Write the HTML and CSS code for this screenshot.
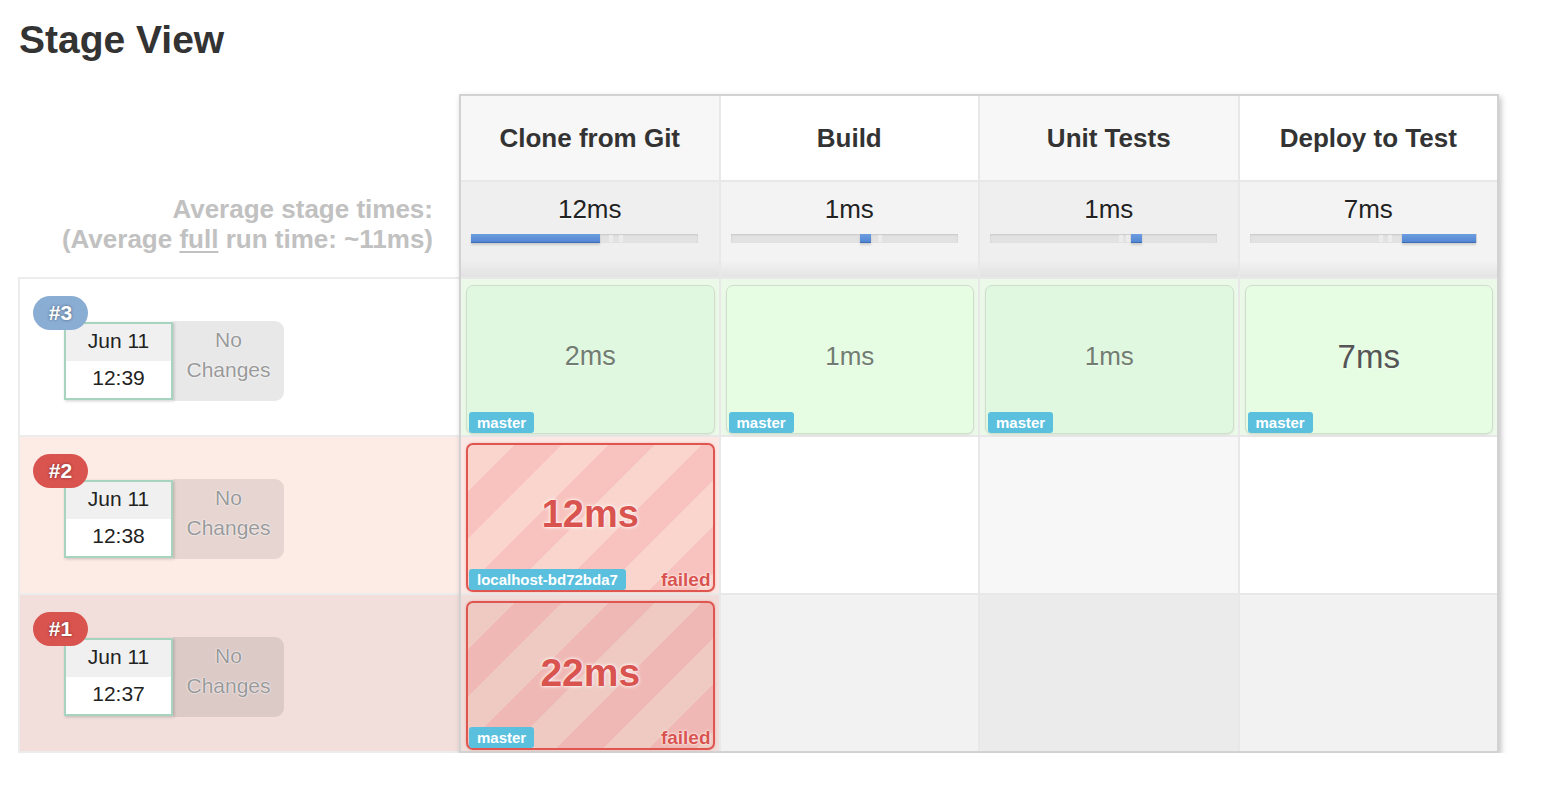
FILE: index.html
```html
<!DOCTYPE html>
<html>
<head>
<meta charset="utf-8">
<title>Stage View</title>
<link rel="stylesheet" href="styles.css">
</head>
<body>
<h2 class="title">Stage View</h2>
<div class="stage-view">
  <div class="runs">
    <div class="runs-head"></div>
    <div class="avg-label">Average stage times:<br>(Average <u>full</u> run time: ~11ms)</div>
    <div class="run-list">
      <div class="run run-ok">
        <div class="run-inner">
          <span class="badge badge-ok">#3</span>
          <div class="date"><div class="date-day">Jun 11</div><div class="date-time">12:39</div></div>
          <div class="changes">No<br>Changes</div>
        </div>
      </div>
      <div class="run run-fail">
        <div class="run-inner">
          <span class="badge badge-fail">#2</span>
          <div class="date"><div class="date-day">Jun 11</div><div class="date-time">12:38</div></div>
          <div class="changes">No<br>Changes</div>
        </div>
      </div>
      <div class="run run-fail-dark">
        <div class="run-inner">
          <span class="badge badge-fail">#1</span>
          <div class="date"><div class="date-day">Jun 11</div><div class="date-time">12:37</div></div>
          <div class="changes">No<br>Changes</div>
        </div>
      </div>
    </div>
  </div>
  <div class="table-box">
    <div class="grid">
      <div class="head col-odd">Clone from Git</div>
      <div class="head col-even">Build</div>
      <div class="head col-odd">Unit Tests</div>
      <div class="head col-even">Deploy to Test</div>

      <div class="avg avg-odd">
        <div class="avg-time">12ms</div>
        <div class="bar">
          <span class="tick" style="left:61%"></span>
          <span class="tick" style="left:65%"></span>
          <span class="seg" style="left:0%;width:57%"></span>
        </div>
      </div>
      <div class="avg avg-even">
        <div class="avg-time">1ms</div>
        <div class="bar">
          <span class="tick" style="left:65%"></span>
          <span class="seg" style="left:57%;width:5%"></span>
        </div>
      </div>
      <div class="avg avg-odd">
        <div class="avg-time">1ms</div>
        <div class="bar">
          <span class="tick" style="left:57%"></span>
          <span class="tick" style="left:60%"></span>
          <span class="seg" style="left:62%;width:5%"></span>
        </div>
      </div>
      <div class="avg avg-even">
        <div class="avg-time">7ms</div>
        <div class="bar">
          <span class="tick" style="left:57%"></span>
          <span class="tick" style="left:61%"></span>
          <span class="seg" style="left:67%;width:33%"></span>
        </div>
      </div>

      <div class="cell cell-ok">
        <div class="box box-ok box-ok-odd">
          <div class="dur dur-ok" style="font-size:27px">2ms</div>
          <div class="foot"><span class="label">master</span></div>
        </div>
      </div>
      <div class="cell cell-ok">
        <div class="box box-ok box-ok-even">
          <div class="dur dur-ok" style="font-size:26px">1ms</div>
          <div class="foot"><span class="label">master</span></div>
        </div>
      </div>
      <div class="cell cell-ok">
        <div class="box box-ok box-ok-odd">
          <div class="dur dur-ok" style="font-size:26px">1ms</div>
          <div class="foot"><span class="label">master</span></div>
        </div>
      </div>
      <div class="cell cell-ok">
        <div class="box box-ok box-ok-even">
          <div class="dur dur-ok dur-dark" style="font-size:33px">7ms</div>
          <div class="foot"><span class="label">master</span></div>
        </div>
      </div>

      <div class="cell cell-fail">
        <div class="box box-fail">
          <div class="dur dur-fail" style="font-size:38px">12ms</div>
          <div class="foot"><span class="label">localhost-bd72bda7</span><span class="failed">failed</span></div>
        </div>
      </div>
      <div class="cell empty-even"></div>
      <div class="cell empty-odd"></div>
      <div class="cell empty-even"></div>

      <div class="cell cell-fail-dark">
        <div class="box box-fail box-fail-dark">
          <div class="dur dur-fail" style="font-size:39px">22ms</div>
          <div class="foot"><span class="label">master</span><span class="failed">failed</span></div>
        </div>
      </div>
      <div class="cell empty-even-dark"></div>
      <div class="cell empty-odd-dark"></div>
      <div class="cell empty-even-dark"></div>
    </div>
  </div>
</div>
</body>
</html>
```

FILE: styles.css
```css
body {
  margin: 0;
  background: #fff;
  color: #333;
  font-family: "Liberation Sans", Arial, Helvetica, sans-serif;
}

.title {
  margin: 17px 0 0 19px;
  font-size: 39px;
  line-height: 46px;
  font-weight: bold;
  color: #333;
}

.stage-view {
  display: flex;
  align-items: flex-start;
  margin-top: 31px;
  padding-left: 18px;
}

/* left column */
.runs {
  width: 441px;
  padding-top: 2px;
}

.runs-head {
  height: 84px;
}

.avg-label {
  height: 95px;
  margin-top: 2px;
  box-sizing: border-box;
  padding: 12px 26px 0 0;
  text-align: right;
  font-size: 26px;
  line-height: 30px;
  font-weight: bold;
  color: #c1c1c1;
}

.avg-label u {
  text-decoration-thickness: 2px;
  text-underline-offset: 3px;
}

.run-list {
  display: flex;
  flex-direction: column;
  gap: 2px;
  background: #ececec;
  padding: 2px 0 2px 2px;
}

.run {
  height: 156px;
  box-sizing: border-box;
  padding: 42px 0 0 44px;
}

.run-ok { background: #fff; }
.run-fail { background: #fdebe6; }
.run-fail-dark { background: #f2dfdb; }

.run-inner {
  position: relative;
  display: flex;
  align-items: center;
}

.badge {
  position: absolute;
  left: -31px;
  top: -25px;
  z-index: 2;
  width: 55px;
  height: 34px;
  border-radius: 17px;
  color: #fff;
  font-size: 21px;
  font-weight: bold;
  line-height: 34px;
  text-align: center;
  text-shadow: 0 0 3px rgba(0, 0, 0, 0.45);
}

.badge-ok { background: #8aadd3; }
.badge-fail { background: #d9534f; }

.date {
  position: relative;
  z-index: 1;
  width: 109px;
  height: 78px;
  box-sizing: border-box;
  border: 2px solid #a6d4be;
  background: #fff;
  box-shadow: 1px 1px 3px rgba(0, 0, 0, 0.2);
  display: flex;
  flex-direction: column;
  font-size: 21px;
  color: #222;
}

.date-day {
  height: 37px;
  line-height: 34px;
  background: #f0f0f0;
  text-align: center;
}

.date-time {
  flex: 1;
  line-height: 34px;
  text-align: center;
}

.changes {
  width: 111px;
  height: 80px;
  box-sizing: border-box;
  padding-top: 4px;
  border-radius: 0 9px 9px 0;
  background: rgba(0, 0, 0, 0.09);
  color: #999;
  font-size: 21px;
  line-height: 30px;
  text-align: center;
  text-shadow: 0 0 2px #fff, 0 0 1px #fff;
}

/* table */
.table-box {
  width: 1036px;
  border: 2px solid #d2d2d2;
  background: #e8e8e8;
  box-shadow: 2px 3px 6px rgba(0, 0, 0, 0.25);
}

.grid {
  display: grid;
  grid-template-columns: repeat(4, 1fr);
  grid-template-rows: 84px 95px 156px 156px 156px;
  gap: 2px;
}

.head {
  display: flex;
  align-items: center;
  justify-content: center;
  font-size: 26px;
  font-weight: bold;
  color: #333;
}

.col-odd { background: #f7f7f7; }
.col-even { background: #fff; }

.avg {
  box-sizing: border-box;
  padding-top: 12px;
}

.avg-odd { background: linear-gradient(to bottom, #efefef 0, #efefef 82%, #e2e2e2 100%); }
.avg-even { background: linear-gradient(to bottom, #f3f3f3 0, #f3f3f3 82%, #e4e4e4 100%); }

.avg-time {
  text-align: center;
  font-size: 26px;
  line-height: 30px;
  color: #222;
  text-shadow: 0 1px 1px #fff;
}

.bar {
  position: relative;
  width: 227px;
  height: 9px;
  margin: 10px 0 0 10px;
  background: #e2e2e2;
  box-shadow: inset 0 1px 2px rgba(0, 0, 0, 0.12);
}

.tick {
  position: absolute;
  top: 1px;
  bottom: 1px;
  width: 4px;
  background: #ececec;
}

.seg {
  position: absolute;
  top: 0;
  height: 8px;
  background: linear-gradient(to bottom, #6d9de0, #5387d3);
  border-bottom: 1px solid #3e6db5;
  box-shadow: 0 2px 2px rgba(0, 0, 0, 0.15);
}

.cell {
  display: flex;
  box-sizing: border-box;
  padding: 6px 4px 1px 5px;
}

.cell-ok { background: #ebf9e9; }
.cell-fail { background: #fbe7e3; }
.cell-fail-dark { background: #f0dcd8; }
.empty-even { background: #fff; }
.empty-odd { background: #f7f7f7; }
.empty-even-dark { background: #f2f2f2; }
.empty-odd-dark { background: #ebebeb; }

.box {
  flex: 1;
  display: flex;
  flex-direction: column;
  border-radius: 7px;
}

.box-ok {
  border: 1px solid #cfdfcc;
  box-shadow: 0 1px 2px rgba(0, 0, 0, 0.08);
}

.box-ok-odd { background: #e0f8df; }
.box-ok-even { background: #e6fde4; }

.box-fail {
  border: 2px solid #df5550;
  background: repeating-linear-gradient(135deg, #f9d5cd 0, #f9d5cd 33px, #f8c3be 33px, #f8c3be 66px);
  box-shadow: 0 0 2px rgba(217, 83, 79, 0.4);
}

.box-fail-dark {
  background: repeating-linear-gradient(135deg, #eecac2 0, #eecac2 33px, #efb8b4 33px, #efb8b4 66px);
}

.dur {
  flex: 1;
  display: flex;
  align-items: center;
  justify-content: center;
  padding-top: 15px;
}

.dur-ok {
  color: #727d72;
  text-shadow: 0 1px 1px rgba(255, 255, 255, 0.6);
}

.dur-dark { color: #555; }

.dur-fail {
  color: #d9534f;
  font-weight: bold;
  text-shadow: 0 0 4px #fff, 0 0 2px #fff;
}

.foot {
  display: flex;
  justify-content: space-between;
  align-items: flex-end;
}

.label {
  margin-left: 2px;
  padding: 0 8px;
  border-radius: 3px;
  background: #5bc0de;
  color: #fff;
  font-size: 15px;
  font-weight: bold;
  line-height: 21px;
}

.box-fail .label {
  margin-left: 1px;
}

.failed {
  margin-right: 2px;
  color: #d9534f;
  font-size: 19px;
  font-weight: bold;
  line-height: 21px;
  text-shadow: 0 0 3px #fff, 0 0 1px #fff;
}
```
